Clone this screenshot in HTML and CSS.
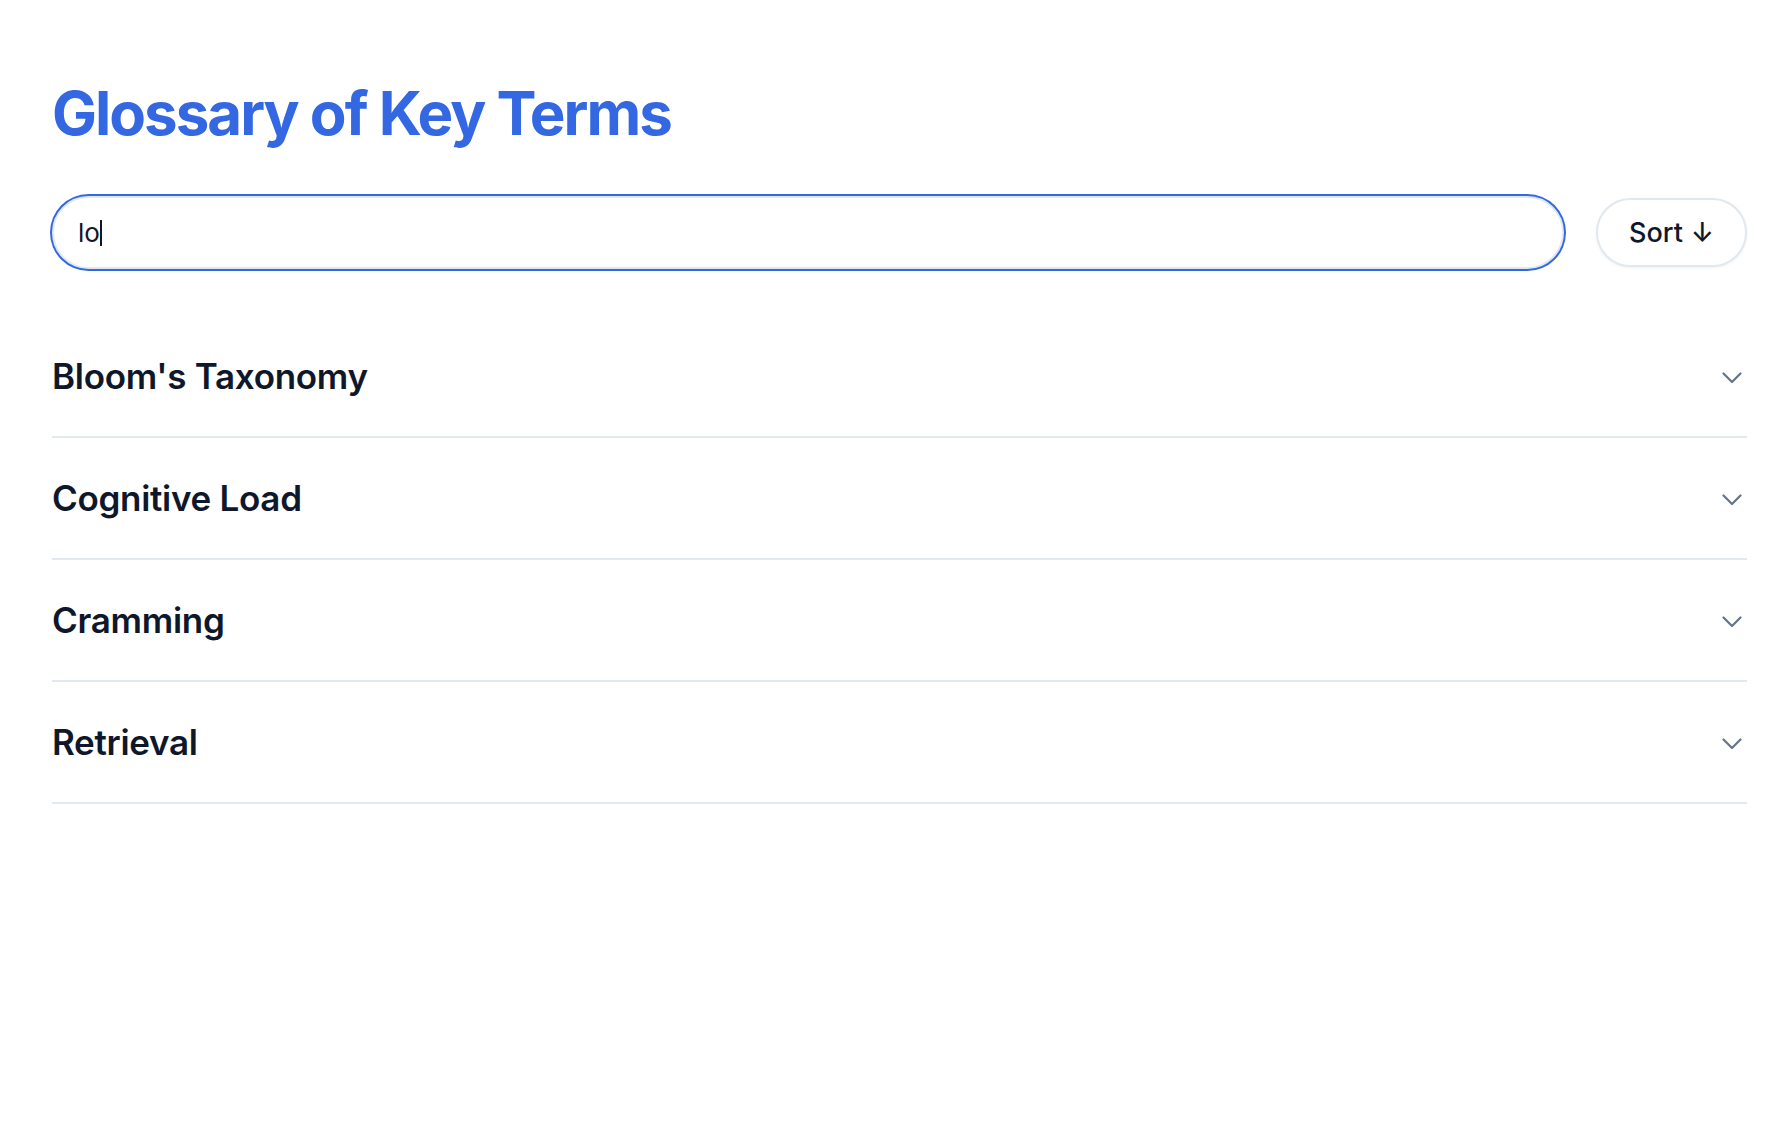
FILE: index.html
```html
<!DOCTYPE html>
<html lang="en">
<head>
<meta charset="utf-8">
<title>Glossary of Key Terms</title>
<link rel="stylesheet" href="styles.css">
</head>
<body>
<main class="page">
  <h1 class="title">Glossary of Key Terms</h1>
  <div class="toolbar">
    <div class="search-wrap">
      <input class="search" type="text" value="lo" autofocus>
      <span class="caret"></span>
    </div>
    <button class="sort" type="button">Sort <span class="arrow">↓</span></button>
  </div>
  <ul class="terms">
    <li class="term"><span class="term-name">Bloom's Taxonomy</span><svg class="chev" viewBox="0 0 20 12" width="20" height="12"><path d="M1.5 1.5 10 10l8.5-8.5"/></svg></li>
    <li class="term"><span class="term-name">Cognitive Load</span><svg class="chev" viewBox="0 0 20 12" width="20" height="12"><path d="M1.5 1.5 10 10l8.5-8.5"/></svg></li>
    <li class="term"><span class="term-name">Cramming</span><svg class="chev" viewBox="0 0 20 12" width="20" height="12"><path d="M1.5 1.5 10 10l8.5-8.5"/></svg></li>
    <li class="term"><span class="term-name">Retrieval</span><svg class="chev" viewBox="0 0 20 12" width="20" height="12"><path d="M1.5 1.5 10 10l8.5-8.5"/></svg></li>
  </ul>
</main>
</body>
</html>
```
FILE: styles.css
```css
html, body {
  margin: 0;
  padding: 0;
  background: #ffffff;
}
body {
  font-family: Inter, "Noto Sans", "Liberation Sans", sans-serif;
  color: #0f172a;
}
.page {
  padding: 77px 25px 40px 52px;
}
.title {
  margin: 0;
  font-size: 60px;
  line-height: 72px;
  font-weight: 700;
  color: #3468e2;
  letter-spacing: -2px;
}
.toolbar {
  display: flex;
  align-items: center;
  gap: 32px;
  margin-top: 47px;
}
.search-wrap {
  flex: 1;
  position: relative;
  display: flex;
}
.search {
  flex: 1;
  height: 73px;
  box-sizing: border-box;
  border: 2px solid #e2e8f0;
  border-radius: 40px;
  box-shadow: 0 0 0 2px #3468e2;
  padding: 0 24px;
  font-family: inherit;
  font-size: 26px;
  color: #0f172a;
  outline: none;
  background: #fff;
  caret-color: transparent;
}
.caret {
  position: absolute;
  left: 48px;
  top: 24px;
  width: 2px;
  height: 26px;
  background: #0f172a;
}
.sort {
  height: 69px;
  width: 151px;
  box-sizing: border-box;
  border: 2px solid #e2e8f0;
  border-radius: 40px;
  background: #fff;
  box-shadow: 0 1px 3px rgba(15, 23, 42, 0.06);
  font-family: inherit;
  font-size: 27px;
  font-weight: 500;
  color: #0f172a;
  display: flex;
  align-items: center;
  justify-content: center;
  gap: 8px;
  padding: 0;
}
.terms {
  list-style: none;
  margin: 47px 0 0;
  padding: 0;
}
.term {
  height: 120px;
  border-bottom: 2px solid #e2e8f0;
  display: flex;
  align-items: center;
  justify-content: space-between;
}
.term-name {
  font-size: 35px;
  font-weight: 600;
  color: #0f172a;
  letter-spacing: -0.3px;
}
.chev {
  fill: none;
  stroke: #64748b;
  stroke-width: 2.2;
  stroke-linecap: round;
  stroke-linejoin: round;
  margin-right: 5px;
  margin-top: 3px;
}
```
